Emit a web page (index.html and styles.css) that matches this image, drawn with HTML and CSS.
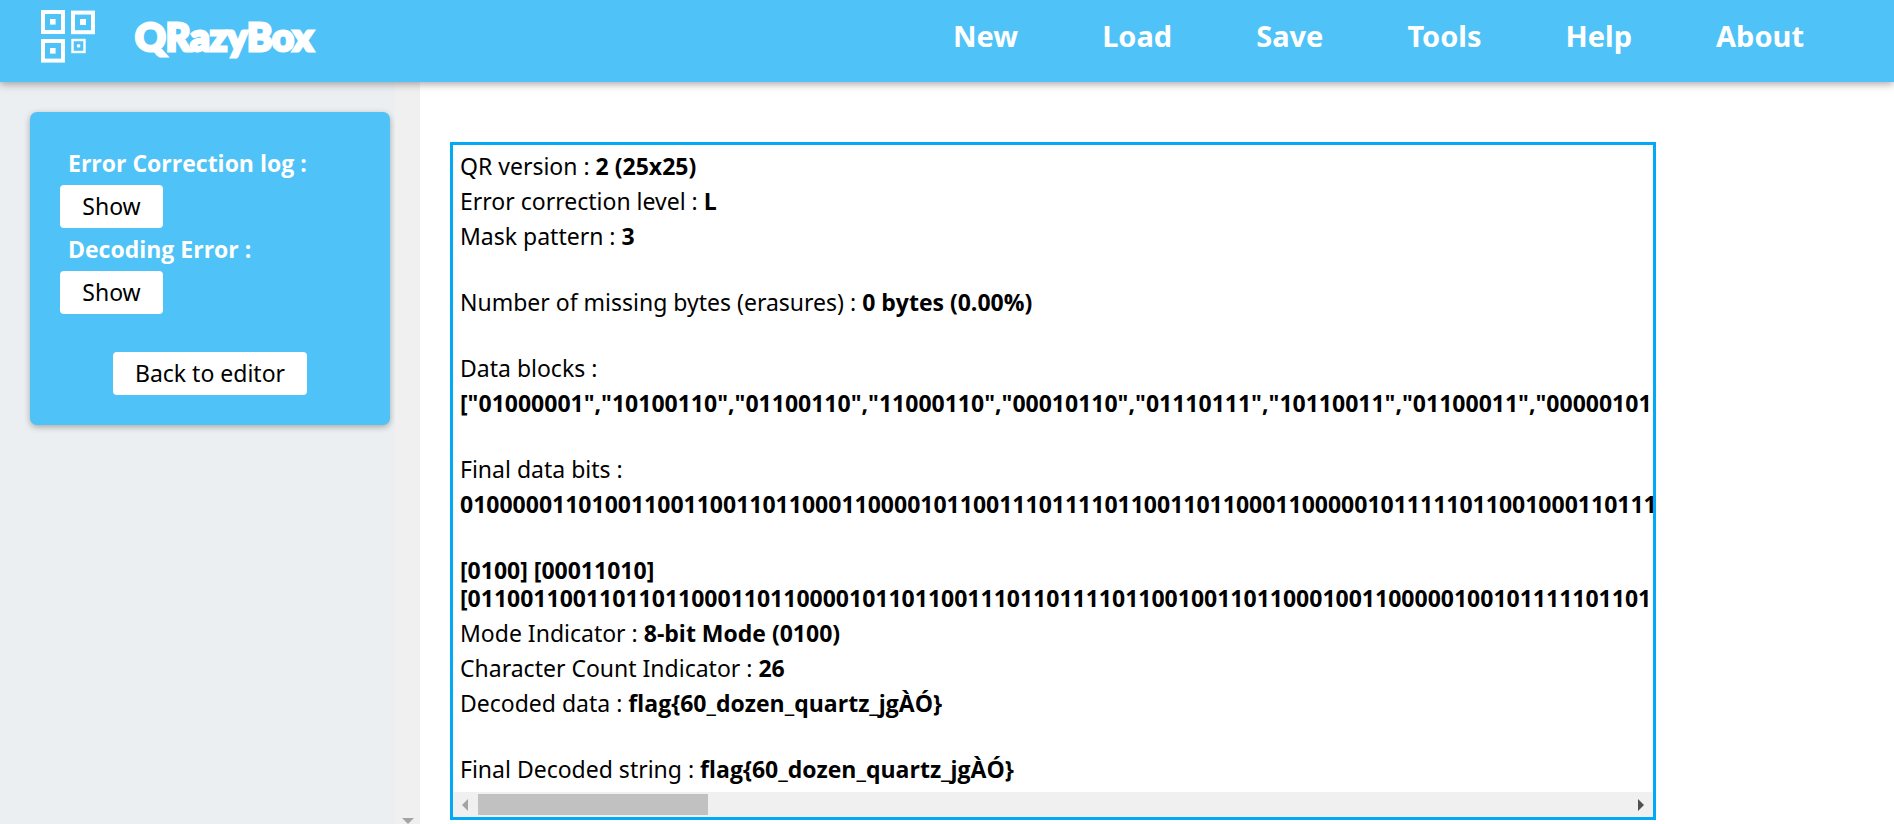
FILE: index.html
```html
<!DOCTYPE html>
<html lang="en">
<head>
<meta charset="utf-8">
<title>QRazyBox</title>
<link rel="stylesheet" href="styles.css">
</head>
<body>
<header class="header">
  <a class="brand" href="#">
    <svg class="logo" viewBox="0 0 54 53" fill="none" stroke="#fff" aria-hidden="true">
      <g stroke-width="4">
        <rect x="2" y="2" width="20" height="20"/>
        <rect x="32" y="2.6" width="20" height="19.6"/>
        <rect x="2" y="31" width="20" height="19.6"/>
      </g>
      <rect x="31.5" y="30" width="12" height="12" stroke-width="2.4"/>
      <g fill="#fff" stroke="none">
        <rect x="9" y="9" width="5.6" height="5.6"/>
        <rect x="39" y="9" width="6" height="6"/>
        <rect x="9" y="38" width="5.6" height="5.6"/>
        <rect x="36" y="34.4" width="3.2" height="3"/>
      </g>
    </svg>
    <span class="brand-name">QRazyBox</span>
  </a>
  <nav class="nav">
    <a href="#">New</a>
    <a href="#">Load</a>
    <a href="#">Save</a>
    <a href="#">Tools</a>
    <a href="#">Help</a>
    <a href="#">About</a>
  </nav>
</header>
<div class="layout">
  <aside class="sidebar">
    <section class="card">
      <div class="label" id="log-label">Error Correction log :</div>
      <button class="button" type="button" aria-describedby="log-label">Show</button>
      <div class="label" id="error-label">Decoding Error :</div>
      <button class="button" type="button" aria-describedby="error-label">Show</button>
      <button class="button back" type="button">Back to editor</button>
    </section>
  </aside>
  <div class="vscroll" aria-hidden="true">
    <svg class="arrow-down" viewBox="0 0 12 6"><path d="M0 0h12L6 6z" fill="#a3a3a3"/></svg>
  </div>
  <main class="main">
    <section class="result">
      <div class="rows">
        <div>QR version : <b>2 (25x25)</b></div>
        <div>Error correction level : <b>L</b></div>
        <div>Mask pattern : <b>3</b></div>
        <div class="blank"></div>
        <div>Number of missing bytes (erasures) : <b>0 bytes (0.00%)</b></div>
        <div class="blank"></div>
        <div>Data blocks :</div>
        <div><b>["01000001","10100110","01100110","11000110","00010110","01110111","10110011","01100011","00000101</b></div>
        <div class="blank"></div>
        <div>Final data bits :</div>
        <div><b>01000001101001100110011011000110000101100111011110110011011000110000010111110110010001101111</b></div>
        <div class="blank"></div>
        <div><b>[0100] [00011010]<br>[011001100110110110001101100001011011001110110111101100100110110001001100000100101111101101</b></div>
        <div>Mode Indicator : <b>8-bit Mode (0100)</b></div>
        <div>Character Count Indicator : <b>26</b></div>
        <div>Decoded data : <b>flag{60_dozen_quartz_jgÀÓ}</b></div>
        <div class="blank"></div>
        <div>Final Decoded string : <b>flag{60_dozen_quartz_jgÀÓ}</b></div>
      </div>
      <div class="hscroll" aria-hidden="true">
        <svg class="arrow-side" viewBox="0 0 6 12"><path d="M6 0v12L0 6z" fill="#a3a3a3"/></svg>
        <div class="track"><div class="thumb"></div></div>
        <svg class="arrow-side" viewBox="0 0 6 12"><path d="M0 0v12l6-6z" fill="#505050"/></svg>
      </div>
    </section>
  </main>
</div>
</body>
</html>
```
FILE: styles.css
```css
* {
  box-sizing: border-box;
}

body {
  margin: 0;
  height: 100vh;
  display: flex;
  flex-direction: column;
  overflow: hidden;
  background: #fff;
  color: #000;
  font-family: "Noto Sans", "Open Sans", sans-serif;
  font-size: 23px;
  line-height: 28px;
}

b {
  font-family: "Open Sans", "Noto Sans", sans-serif;
}

.header {
  position: relative;
  z-index: 1;
  flex: none;
  display: flex;
  justify-content: space-between;
  align-items: flex-start;
  padding: 10px 90px 9px 41px;
  background: #4fc3f7;
  box-shadow: 0 2px 8px rgba(0, 0, 0, 0.35);
}

.brand {
  display: flex;
  gap: 40px;
  color: #fff;
  text-decoration: none;
}

.logo {
  width: 54px;
  height: 53px;
}

.brand-name {
  font-family: Lato, sans-serif;
  font-size: 38px;
  font-weight: 900;
  line-height: 53px;
  -webkit-text-stroke: 3px #fff;
}

.nav {
  display: flex;
  gap: 84px;
  height: 63px;
}

.nav a {
  color: #fff;
  font-size: 29px;
  font-weight: 700;
  line-height: 52px;
  text-decoration: none;
}

.layout {
  flex: 1;
  min-height: 0;
  display: flex;
}

.sidebar {
  flex: none;
  width: 395px;
  padding: 30px 5px 30px 30px;
  background: #eceff1;
}

.card {
  display: flex;
  flex-direction: column;
  align-items: flex-start;
  padding: 30px;
  border-radius: 7px;
  background: #4fc3f7;
  box-shadow: 0 2px 6px rgba(0, 0, 0, 0.3);
}

.label {
  padding-left: 8px;
  color: #fff;
  font-family: "Open Sans", "Noto Sans", sans-serif;
  font-weight: 700;
  line-height: 43px;
}

.button {
  min-width: 103px;
  height: 43px;
  padding: 0 22px 2px;
  border: 0;
  border-radius: 4px;
  background: #fff;
  color: #000;
  font: inherit;
}

.back {
  align-self: center;
  margin-top: 38px;
}

.vscroll {
  flex: none;
  display: flex;
  width: 25px;
  align-items: flex-end;
  justify-content: center;
  background: #f0f0f0;
}

.arrow-down {
  width: 12px;
  height: 6px;
}

.main {
  flex: 1;
  min-width: 0;
  padding: 60px 238px 0 30px;
}

.result {
  border: 3px solid #03a9f4;
  background: #fff;
}

.rows {
  display: flex;
  flex-direction: column;
  gap: 7px;
  padding: 7px 0 9px 7px;
  overflow: hidden;
  white-space: nowrap;
}

.blank {
  height: 24px;
}

.hscroll {
  display: flex;
  align-items: center;
  height: 25px;
  padding: 0 9px;
  gap: 10px;
  background: #f0f0f0;
}

.arrow-side {
  flex: none;
  width: 6px;
  height: 12px;
}

.track {
  flex: 1;
}

.thumb {
  width: 20%;
  height: 21px;
  background: #c1c1c1;
}
```
